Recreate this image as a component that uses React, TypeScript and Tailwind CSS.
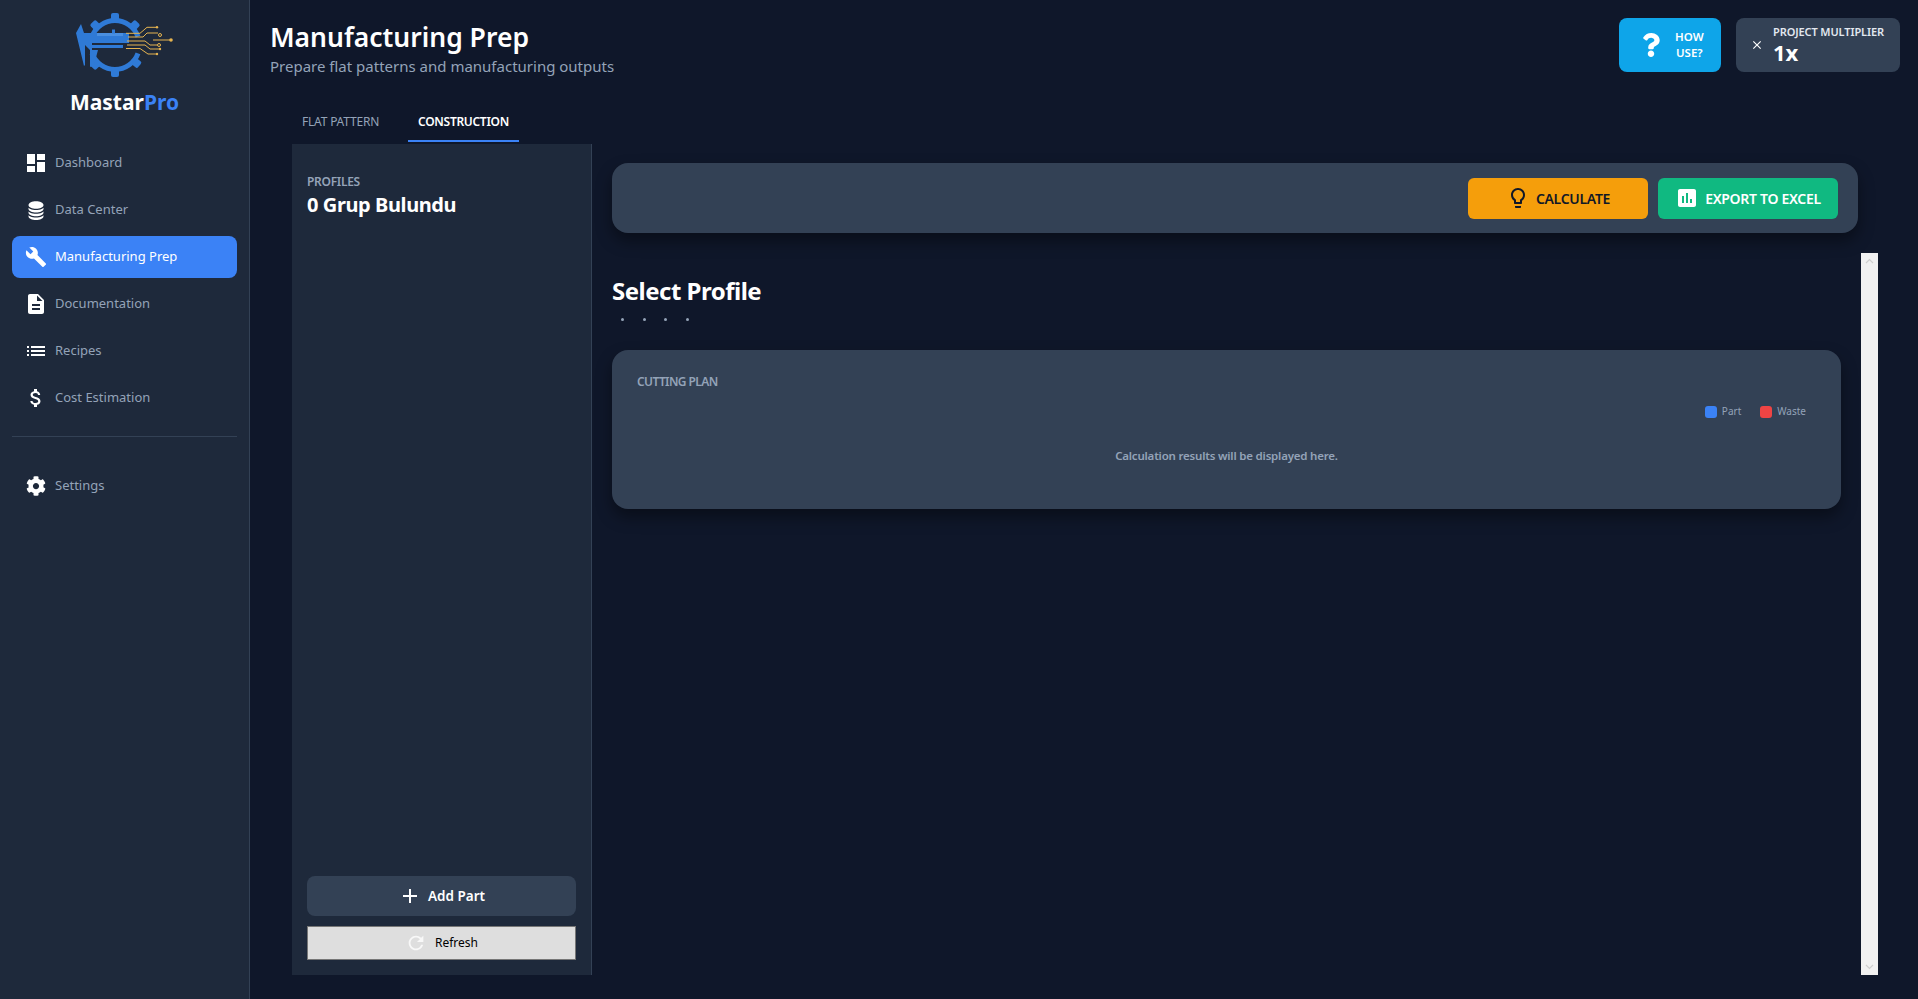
import React from "react";
import { MdDashboard, MdBuild, MdDescription, MdAttachMoney, MdClose, MdOutlineLightbulb, MdAssessment, MdAdd, MdRefresh, MdList } from "react-icons/md";
import { FaCog, FaQuestion } from "react-icons/fa";
import { BsDatabaseFill } from "react-icons/bs";

function Logo() {
  const teeth = [90, 135, 45, -40, -90, -135];
  const traces = [
    "M126 33.3H140L147 27.3H157",
    "M128 37H143L147 33H158",
    "M153 40H171",
    "M127 41H145L150 45H157",
    "M127 45H145L150 49H160",
    "M126 48.5H140L148 54H157",
  ];
  return (
    <svg viewBox="70 10 110 70" className="w-[110px] h-[70px] block">
      <g fill="none" stroke="#2f7ad6" strokeWidth="5">
        <path d="M92 36.6A24.5 24.5 0 0 1 138 36.6" />
        <path d="M138 53.4A24.5 24.5 0 0 1 92 53.4" />
      </g>
      {teeth.map((a) => (
        <rect key={a} x="111" y="13" width="8" height="8" rx="2" fill="#2f7ad6" transform={`rotate(${90 - a} 115 45)`} />
      ))}
      <g fill="#2f7ad6">
        <path d="M81 24L84 33H129V43H92V50H98L94 65L90 67L90 50L85 45V65L84 66L76 33Z" />
        <rect x="97" y="33" width="26" height="3" fill="#4a8fe0" />
        <rect x="112" y="29.5" width="3" height="4" />
        <rect x="92" y="45" width="31" height="3" />
      </g>
      <g fill="none" stroke="#e6b450" strokeWidth="1">
        {traces.map((d) => <path key={d} d={d} />)}
        <circle cx="160" cy="35" r="1.5" />
        <circle cx="159" cy="45" r="1.5" />
      </g>
      <g fill="#e6b450">
        <circle cx="157" cy="27.3" r="1.2" />
        <circle cx="171" cy="40" r="1.8" />
        <circle cx="160" cy="49" r="1.2" />
        <circle cx="157" cy="54" r="1.2" />
      </g>
    </svg>
  );
}

function NavItem({ icon, label, active }: { icon: React.ReactNode; label: string; active?: boolean }) {
  return (
    <div className={`h-[42px] flex items-center gap-[7px] px-3 rounded-lg text-[13px] ${active ? "bg-[#3b82f6] text-white" : "text-[#94a3b8]"}`}>
      <span className="w-6 h-6 flex items-center justify-center text-white">{icon}</span>
      <span>{label}</span>
    </div>
  );
}

export default function App() {
  return (
    <div className="h-[999px] w-[1918px] flex overflow-hidden bg-[#0f172a] font-['Noto_Sans','Open_Sans',sans-serif]">
      <aside className="w-[250px] shrink-0 bg-[#1e293b] border-r border-[#334155] flex flex-col px-3">
        <div className="pt-[10px] flex flex-col items-center">
          <Logo />
          <div className="mt-[8px] text-[21px] leading-7 font-bold text-white">Mastar<span className="text-[#3b82f6]">Pro</span></div>
        </div>
        <nav className="mt-[26px] flex flex-col gap-[5px]">
          <NavItem icon={<MdDashboard size={24} />} label="Dashboard" />
          <NavItem icon={<BsDatabaseFill size={20} />} label="Data Center" />
          <NavItem icon={<MdBuild size={22} />} label="Manufacturing Prep" active />
          <NavItem icon={<MdDescription size={24} />} label="Documentation" />
          <NavItem icon={<MdList size={24} />} label="Recipes" />
          <NavItem icon={<MdAttachMoney size={28} />} label="Cost Estimation" />
        </nav>
        <div className="mt-[17px] border-t border-[#334155]" />
        <div className="mt-[28px]">
          <NavItem icon={<FaCog size={20} />} label="Settings" />
        </div>
      </aside>

      <main className="flex-1 flex flex-col min-w-0 pl-5 pr-[18px] pt-[18px] pb-6">
        <header className="h-[54px] flex items-center justify-between">
          <div className="mt-[6px]">
            <h1 className="text-[26.5px] leading-[36px] font-semibold text-white">Manufacturing Prep</h1>
            <p className="text-[15px] leading-[22px] text-[#94a3b8]">Prepare flat patterns and manufacturing outputs</p>
          </div>
          <div className="flex gap-[15px]">
            <div className="w-[102px] h-[54px] rounded-lg bg-[#0ea5e9] text-white flex items-center pl-[20px] gap-[12px]">
              <FaQuestion size={24} />
              <div className="text-[11.5px] leading-[16px] font-semibold text-center">HOW<br />USE?</div>
            </div>
            <div className="w-[164px] h-[54px] rounded-lg bg-[#334155] flex items-center pl-[14px] gap-[9px]">
              <MdClose size={14} className="text-white" />
              <div className="-mt-px">
                <div className="text-[11px] leading-[14px] font-semibold text-[#e2e8f0] whitespace-nowrap tracking-[-0.1px]">PROJECT MULTIPLIER</div>
                <div className="text-[22px] leading-[26px] font-bold text-white">1x</div>
              </div>
            </div>
          </div>
        </header>

        <div className="ml-[22px] mr-[22px] flex-1 flex flex-col min-h-0">
          <div className="mt-[30px] h-[40px] flex text-[12px] font-semibold">
            <div className="w-[116px] flex items-center pl-[10px] text-[#94a3b8] font-normal tracking-[-0.2px]">FLAT PATTERN</div>
            <div className="w-[111px] flex items-center justify-center text-white border-b-2 border-[#3b82f6] pt-[2px] tracking-[-0.3px]">CONSTRUCTION</div>
          </div>
          <div className="mt-[2px] flex-1 flex min-h-0">
            <section className="w-[300px] shrink-0 bg-[#1e293b] border-r border-[#334155] flex flex-col px-[15px] pt-[30px] pb-[15px]">
              <div className="text-[12px] leading-4 font-semibold text-[#94a3b8] tracking-[-0.3px]">PROFILES</div>
              <div className="mt-[1px] text-[20px] leading-[28px] font-bold text-white tracking-[-0.4px]">0 Grup Bulundu</div>
              <div className="mt-auto flex flex-col gap-[10px]">
                <div className="h-[40px] rounded-lg bg-[#334155] flex items-center justify-center gap-[6px] text-white text-[13.5px] font-semibold">
                  <MdAdd size={24} />Add Part
                </div>
                <div className="h-[34px] bg-[#dedede] border border-[#767676] flex items-center justify-center gap-2 text-[12px] text-black">
                  <MdRefresh size={22} className="text-[#f8f8f8]" />Refresh
                </div>
              </div>
            </section>
            <section className="flex-1 min-w-0 flex flex-col pl-5 pt-[19px]">
              <div className="mr-[20px] h-[70px] shrink-0 rounded-2xl bg-[#334155] shadow-[0_8px_16px_rgba(0,0,0,0.4)] flex items-center justify-end gap-[10px] pr-5">
                <div className="w-[180px] h-[41px] rounded-md bg-[#f59e0b] flex items-center justify-center gap-[6px] text-[14px] font-semibold text-[#111827] tracking-[-0.3px]">
                  <MdOutlineLightbulb size={24} />CALCULATE
                </div>
                <div className="w-[180px] h-[41px] rounded-md bg-[#10b981] flex items-center justify-center gap-[6px] text-[14px] font-semibold text-white tracking-[-0.3px]">
                  <MdAssessment size={24} />EXPORT TO EXCEL
                </div>
              </div>
              <div className="mt-[20px] flex-1 flex min-h-0">
                <div className="flex-1 min-w-0 pr-5">
                  <h2 className="mt-[20px] text-[24px] leading-[36px] font-bold text-white tracking-[-0.5px]">Select Profile</h2>
                  <div className="flex gap-[18.5px] pl-[9px] mt-[9px]">
                    <span className="w-[3px] h-[3px] rounded-full bg-[#94a3b8]" />
                    <span className="w-[3px] h-[3px] rounded-full bg-[#94a3b8]" />
                    <span className="w-[3px] h-[3px] rounded-full bg-[#94a3b8]" />
                    <span className="w-[3px] h-[3px] rounded-full bg-[#94a3b8]" />
                  </div>
                  <div className="mt-[29px] h-[159px] rounded-2xl bg-[#334155] shadow-[0_8px_16px_rgba(0,0,0,0.4)] px-[25px] pt-[24px]">
                    <div className="text-[12px] leading-4 font-semibold text-[#94a3b8] tracking-[-0.6px]">CUTTING PLAN</div>
                    <div className="mt-[14px] pr-[10px] flex justify-end gap-[10px] text-[10px] text-[#94a3b8]">
                      <div className="flex items-center gap-[5px]"><span className="w-3 h-3 rounded-[3px] bg-[#3b82f6]" />Part</div>
                      <div className="flex items-center gap-[5px] ml-[9px]"><span className="w-3 h-3 rounded-[3px] bg-[#ef4444]" />Waste</div>
                    </div>
                    <div className="mt-[29px] text-center text-[11.5px] leading-4 font-semibold text-[#94a3b8] tracking-[-0.2px]">Calculation results will be displayed here.</div>
                  </div>
                </div>
                <div className="w-[17px] shrink-0 bg-[#f1f1f1] flex flex-col justify-between items-center py-[5px] text-[#cfcfcf]">
                  <svg width="9" height="6" viewBox="0 0 9 6" fill="none" stroke="currentColor" strokeWidth="1.2"><path d="M1 5L4.5 1.5L8 5" /></svg>
                  <svg width="9" height="6" viewBox="0 0 9 6" fill="none" stroke="currentColor" strokeWidth="1.2"><path d="M1 1L4.5 4.5L8 1" /></svg>
                </div>
              </div>
            </section>
          </div>
        </div>
      </main>
    </div>
  );
}
